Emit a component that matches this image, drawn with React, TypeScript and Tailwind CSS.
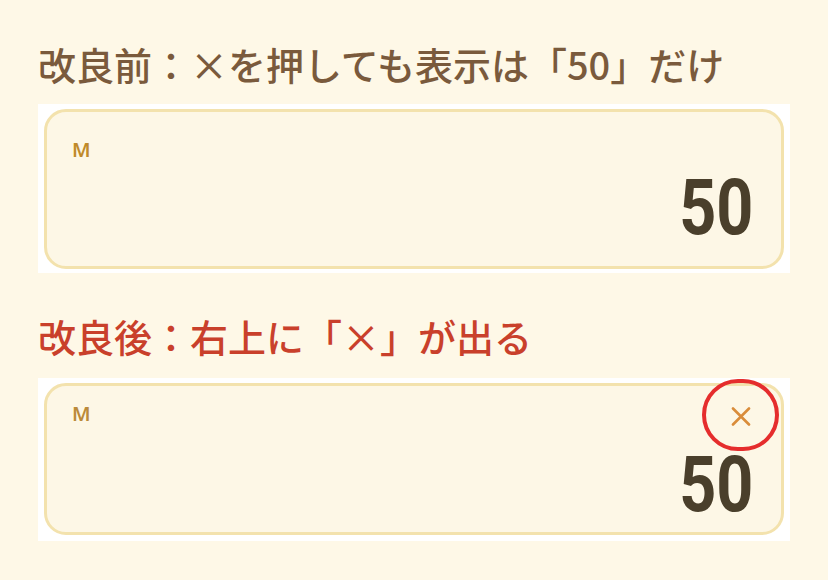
import React from "react";

const jp = '"Noto Sans CJK JP", "Noto Sans", sans-serif';
const num = 'Roboto, "Liberation Sans", sans-serif';

function XIcon() {
  return (
    <svg width="20" height="19" viewBox="0 0 20 19" fill="none">
      <path d="M2 1.5 L18 17.5 M18 1.5 L2 17.5" stroke="#d98c3a" strokeWidth="2.6" strokeLinecap="round" />
    </svg>
  );
}

export default function App() {
  return (
    <div className="w-[828px] h-[580px] bg-[#fef8e7] overflow-hidden pl-[38px]" style={{ fontFamily: jp }}>
      <h1 className="pt-[40px] text-[38px] leading-[48px] font-medium text-[#7a5a3c] whitespace-nowrap">
        改良前：×を押しても表示は「50」だけ
      </h1>
      <div className="mt-[16px] w-[752px] bg-white px-[6px] pt-[5px] pb-[4px]">
        <div className="h-[160px] rounded-[22px] border-[3px] border-[#f3e2ad] bg-[#fdf7e6] pl-[25px] pr-[28px] pt-[28px] flex flex-col">
          <div className="text-[20px] leading-[20px] font-semibold text-[#c08a2a]" style={{ fontFamily: '"Noto Sans", sans-serif' }}>M</div>
          <div className="mt-[10px] flex justify-end">
            <span className="block origin-right scale-x-[0.84] text-[77px] leading-none font-bold text-[#4a3f2b]" style={{ fontFamily: num }}>50</span>
          </div>
        </div>
      </div>
      <h2 className="mt-[39px] text-[38px] leading-[48px] font-medium text-[#c9402b] whitespace-nowrap">
        改良後：右上に「<span className="inline-block w-[1em] text-center">×</span>」が出る
      </h2>
      <div className="relative mt-[18px] w-[752px] bg-white px-[6px] pt-[5px] pb-[6px]">
        <div className="h-[152px] rounded-[22px] border-[3px] border-[#f3e2ad] bg-[#fdf7e6] pl-[25px] pr-[28px] pt-[18px] flex flex-col">
          <div className="flex items-start justify-between">
            <div className="text-[20px] leading-[20px] font-semibold text-[#bb8a3a]" style={{ fontFamily: '"Noto Sans", sans-serif' }}>M</div>
            <div className="mt-[3px] mr-[2px]"><XIcon /></div>
          </div>
          <div className="mt-[21px] flex justify-end">
            <span className="block origin-right scale-x-[0.84] text-[77px] leading-none font-bold text-[#4a3f2b]" style={{ fontFamily: num }}>50</span>
          </div>
        </div>
        <div className="absolute left-[664px] top-[1px] w-[77px] h-[72px] rounded-full border-[4px] border-[#e52d2d]" />
      </div>
    </div>
  );
}
